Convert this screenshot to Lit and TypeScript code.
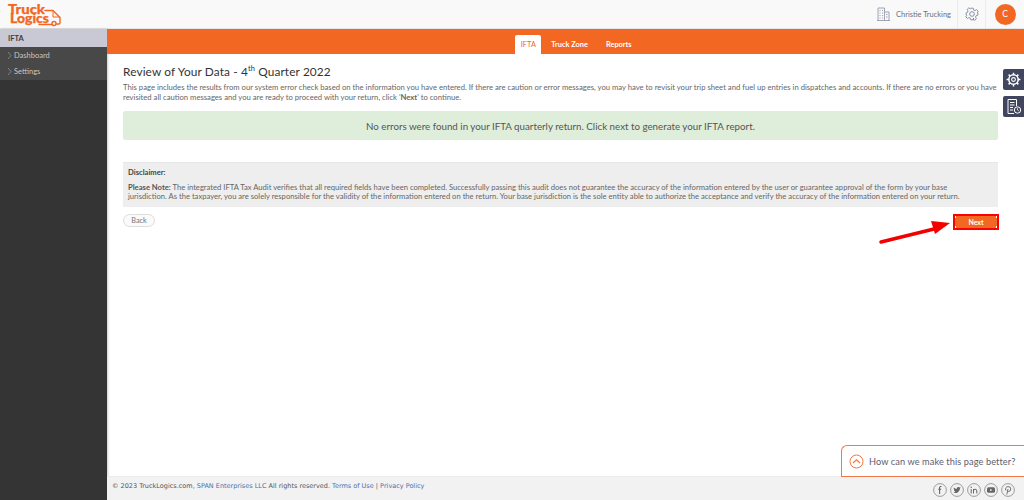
import { LitElement, html, css, svg } from "lit";
import { customElement } from "lit/decorators.js";

const chevron = svg`<path d="M1 1l3 3.500-3 3.500" fill="none" stroke="#9a9a9a" stroke-width=".7"/>`;

@customElement("app-root")
export class AppRoot extends LitElement {
  static styles = css`
    :host { display: block; width: 1024px; height: 500px; overflow: hidden; position: relative; font-family: Lato, "Liberation Sans", sans-serif; color: #555; background: #fff; }
    * { box-sizing: border-box; }
    .header { height: 29px; background: #f9f9f9; display: flex; align-items: center; justify-content: space-between; border-bottom: 1px solid #e6e6e6; }
    .logo { margin-left: 7px; display: block; }
    .hright { display: flex; height: 28px; align-items: center; }
    .company { display: flex; align-items: center; gap: 6px; font-size: 7.5px; color: #6b6f80; padding-right: 6px; height: 28px; border-right: 1px solid #ececec; justify-content: flex-end; }
    .gear { width: 28px; height: 28px; display: flex; align-items: center; justify-content: center; border-right: 1px solid #ececec; }
    .avatar-wrap { width: 38px; display: flex; justify-content: center; }
    .avatar { width: 21px; height: 21px; border-radius: 50%; background: #f26722; color: #fff; font-size: 8.5px; display: flex; align-items: center; justify-content: center; }
    .body { display: flex; height: 471px; }
    .side { width: 107px; background: #343434; flex: none; box-shadow: 1px 0 2px rgba(0,0,0,.2); }
    .side-title { height: 18px; background: #c9c9d5; color: #3c3c46; font-size: 7.5px; font-weight: 700; padding-left: 8px; display: flex; align-items: center; }
    .side-menu { background: #484848; height: 33px; }
    .side-item { height: 16px; display: flex; align-items: center; color: #c6c6c6; font-size: 7.5px; padding-left: 7px; gap: 2px; }
    .side-item svg { width: 5px; height: 9px; }
    .main { flex: 1; display: flex; flex-direction: column; min-width: 0; }
    .tabs { height: 25px; background: #f26722; display: flex; justify-content: center; align-items: flex-end; padding-left: 21px; }
    .tab { height: 19px; padding: 0 5px; font-size: 7.4px; font-weight: 700; color: #fff; display: flex; align-items: center; margin: 0 8px 0 0; }
    .tab.on { background: #fff; color: #f26722; font-weight: 400; border-radius: 2px 2px 0 0; width: 26px; justify-content: center; padding: 0; margin-right: 5px; }
    .tab.r { margin-right: 0; }
    .content { flex: 1; padding: 9px 26px 0 16px; }
    h1 { margin: 0; font-size: 11.85px; line-height: 17px; font-weight: 400; color: #333; letter-spacing: .12px; }
    h1 sup { font-size: 7.5px; line-height: 0; vertical-align: 5px; }
    .intro { margin: 3px 0 0; font-size: 7.68px; line-height: 9.5px; color: #666; width: 874px; }
    .ok { margin-top: 9px; height: 29px; background: #dfeeda; border-radius: 2px; display: flex; align-items: center; justify-content: center; font-size: 9.75px; color: #555; }
    .disc { margin-top: 22px; height: 45px; background: #eee; padding: 4px 5px; border-top: 1px solid #e6e6e6; }
    .disc b.t { display: block; font-size: 7.6px; line-height: 10px; color: #444; margin-bottom: 6px; }
    .disc p { margin: 0; font-size: 7.63px; line-height: 9.3px; color: #666; white-space: nowrap; }
    .disc p b { color: #555; }
    .actions { display: flex; justify-content: space-between; margin-top: 7px; align-items: flex-start; }
    .back { width: 32px; height: 13px; border: 1px solid #ddd; border-radius: 7px; background: #fafafa; font-size: 7.3px; color: #777; display: flex; align-items: center; justify-content: center; }
    .next { width: 46px; height: 16px; border: 2px solid #f00; color: #fff; font-size: 7px; font-weight: 700; display: flex; align-items: center; justify-content: center; margin-right: -1px;
      background:
        linear-gradient(#fff, #fff) 0 0 / 1px 2px no-repeat,
        linear-gradient(#fff, #fff) 100% 0 / 1px 2px no-repeat,
        linear-gradient(#fff, #fff) 0 100% / 1px 2px no-repeat,
        linear-gradient(#fff, #fff) 100% 100% / 1px 2px no-repeat,
        #f26722; }
    .footer { height: 24px; background: #f2f2f2; border-top: 1px solid #ececec; display: flex; align-items: center; justify-content: space-between; padding: 0 9px 6px 5px; font-family: "DejaVu Sans", sans-serif; font-size: 6.5px; color: #555; }
    .footer a { color: #4a6fb0; }
    .social { display: flex; gap: 3px; margin-top: 8px; }
    .social svg { width: 14px; height: 14px; display: block; }
    .float { position: absolute; right: 0; width: 21px; height: 21px; background: #41465e; border-radius: 2px 0 0 2px; display: flex; align-items: center; justify-content: center; }
    .f1 { top: 69px; } .f2 { top: 96px; }
    .arrow { position: absolute; left: 878px; top: 216px; }
    .fb { position: absolute; left: 841px; top: 445px; width: 183px; height: 32px; background: #fff; border: 1px solid #f2794a; border-right: 0; border-radius: 6px 0 0 0; display: flex; align-items: center; gap: 5px; padding-left: 7px; font-size: 9.2px; color: #5c6070; letter-spacing: .1px; white-space: nowrap; }
  `;

  render() {
    return html`
      <div class="header">
        <svg class="logo" width="56" height="26" viewBox="0 0 56 26" fill="none" stroke="#f26722" stroke-width="1.400">
          <path d="M38 9.500h8l7 7v5.500a1 1 0 0 1-1 1h-2.500M45 23.500H32" stroke-linejoin="round" stroke-linecap="round"/>
          <path d="M46 10v6h7" stroke-width="1"/>
          <circle cx="47" cy="22.500" r="2"/>
          <text font-family="Lato, sans-serif" font-size="12.500" font-weight="900" fill="#f26722" stroke="#f26722" stroke-width=".25"><tspan x="1" y="12.500" textLength="37" lengthAdjust="spacingAndGlyphs">Truck</tspan><tspan x="3" y="21.500" textLength="39" lengthAdjust="spacingAndGlyphs">Logics</tspan></text>
        </svg>
        <div class="hright">
          <div class="company">
            <svg width="13" height="14" viewBox="0 0 13 14" fill="none" stroke="#8a8fa5" stroke-width=".8"><path d="M1 13.500V1h6.500v12.500M7.500 5H12v8.500M0 13.500h13M2.500 3.500h1M5 3.500h1M2.500 6h1M5 6h1M2.500 8.500h1M5 8.500h1M2.500 11h1M5 11h1M9 7.500h1.500M9 10h1.500"/></svg>
            Christie Trucking
          </div>
          <div class="gear">
            <svg width="14" height="14" viewBox="0 0 24 24" fill="none" stroke="#7c819a" stroke-width="1.500"><circle cx="12" cy="12" r="4"/><path d="M10 2h4l.7 3 2.500 1.100 2.700-1.600 2.800 2.800-1.600 2.700L22 10v4l-2.900.9-1.100 2.500 1.500 2.700-2.800 2.800-2.700-1.500L14.700 19 14 22h-4l-.7-2.700-2.500-1.100-2.600 1.500-2.800-2.800 1.500-2.600L2 14v-4l2.200-.7 1-2.500L3.700 4.200l2.800-2.700 2.600 1.500z" stroke-linejoin="round"/></svg>
          </div>
          <div class="avatar-wrap"><div class="avatar">C</div></div>
        </div>
      </div>
      <div class="body">
        <div class="side">
          <div class="side-title">IFTA</div>
          <div class="side-menu">
            <div class="side-item"><svg viewBox="0 0 5 9">${chevron}</svg>Dashboard</div>
            <div class="side-item"><svg viewBox="0 0 5 9">${chevron}</svg>Settings</div>
          </div>
        </div>
        <div class="main">
          <div class="tabs">
            <div class="tab on">IFTA</div>
            <div class="tab">Truck Zone</div>
            <div class="tab r">Reports</div>
          </div>
          <div class="content">
            <h1>Review of Your Data - 4<sup>th</sup> Quarter 2022</h1>
            <p class="intro">This page includes the results from our system error check based on the information you have entered. If there are caution or error messages, you may have to revisit your trip sheet and fuel up entries in dispatches and accounts. If there are no errors or you have revisited all caution messages and you are ready to proceed with your return, click '<b>Next</b>' to continue.</p>
            <div class="ok">No errors were found in your IFTA quarterly return. Click next to generate your IFTA report.</div>
            <div class="disc">
              <b class="t">Disclaimer:</b>
              <p><b>Please Note:</b> The integrated IFTA Tax Audit verifies that all required fields have been completed. Successfully passing this audit does not guarantee the accuracy of the information entered by the user or guarantee approval of the form by your base<br>jurisdiction. As the taxpayer, you are solely responsible for the validity of the information entered on the return. Your base jurisdiction is the sole entity able to authorize the acceptance and verify the accuracy of the information entered on your return.</p>
            </div>
            <div class="actions">
              <div class="back">Back</div>
              <div class="next">Next</div>
            </div>
          </div>
          <div class="footer">
            <div>© 2023 TruckLogics.com, <a>SPAN Enterprises LLC</a> All rights reserved. <a>Terms of Use</a> | <a>Privacy Policy</a></div>
            <div class="social">
              ${["f", "t", "in", "y", "p"].map(
                (k) => html`<svg viewBox="0 0 14 14" fill="none">
                  <circle cx="7" cy="7" r="6.400" stroke="#777" stroke-width=".7"/>
                  ${k === "f" ? svg`<path d="M8.500 3.500H7.600Q6.600 3.500 6.600 4.600V11M5.200 6.200h3" stroke="#666" stroke-width="1.100"/>` : ""}
                  ${k === "t" ? svg`<path d="M3.500 9.800Q6 10.600 8 9.200 10.200 7.600 10 5.200L10.800 4.400 9.800 4.500Q8.700 3.400 7.400 4.300 6.600 5 6.800 6 5 5.900 3.800 4.500 3.300 6 4.500 7 3.900 7 3.900 7 4.200 8.200 5.300 8.500 5 9.400 3.500 9.800Z" fill="#666"/>` : ""}
                  ${k === "in" ? svg`<path d="M4.200 6v4.500M6.500 10.500V6M6.500 7.800Q6.600 6.200 8 6.200 9.800 6.200 9.800 8V10.500" stroke="#666" stroke-width="1"/><circle cx="4.200" cy="4.200" r=".7" fill="#666"/>` : ""}
                  ${k === "y" ? svg`<rect x="3" y="4.200" width="8" height="5.600" rx="1.500" fill="#666"/><path d="M6.200 5.700v2.600L8.300 7z" fill="#f2f2f2"/>` : ""}
                  ${k === "p" ? svg`<path d="M5.800 11.500L7 6M4.800 7.500Q3.800 4 7 3.600 10 3.500 9.800 6 9.500 8.700 7.400 8.500 6.500 8.300 6.400 7.700" stroke="#666" stroke-width=".9"/>` : ""}
                </svg>`
              )}
            </div>
          </div>
        </div>
      </div>

      <div class="float f1">
        <svg width="15" height="15" viewBox="0 0 24 24" fill="none" stroke="#fff" stroke-width="2.400"><circle cx="12" cy="12" r="7.500"/><circle cx="12" cy="12" r="3" stroke-width="1.800"/><path d="M12 1v4M12 19v4M1 12h4M19 12h4M4.200 4.200l2.800 2.800M17 17l2.800 2.800M4.200 19.800L7 17M17 7l2.800-2.800"/></svg>
      </div>
      <div class="float f2">
        <svg width="16" height="17" viewBox="0 0 16 17" fill="none" stroke="#fff" stroke-width="1"><path d="M10.500 8V1.500H2v14h6"/><path d="M4 4.500h4.500M4 7h4.500M4 9.500h3M4 12h3"/><circle cx="11.500" cy="12" r="3.200"/><path d="M11.500 10.300V12l1.200.8" stroke-width=".8"/></svg>
      </div>

      <svg class="arrow" width="74" height="30" viewBox="0 0 74 30">
        <path d="M3 26L56 13" stroke="#f40000" stroke-width="3.500" stroke-linecap="round"/>
        <path d="M53 5L72 7 57 18z" fill="#f40000"/>
      </svg>

      <div class="fb">
        <svg width="15" height="15" viewBox="0 0 15 15" fill="none" stroke="#f2794a" stroke-width="1"><circle cx="7.500" cy="7.500" r="6.500"/><path d="M4 9l3.500-3.200L11 9" stroke-width="1.200"/></svg>
        How can we make this page better?
      </div>
    `;
  }
}
